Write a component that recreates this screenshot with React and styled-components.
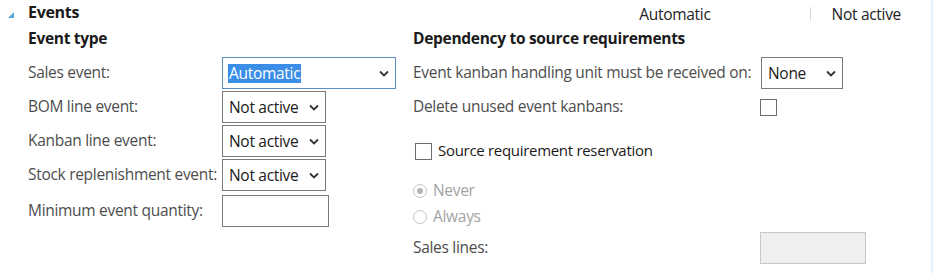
import React from 'react';
import styled, { createGlobalStyle } from 'styled-components';

const GlobalStyle = createGlobalStyle`
  html, body {
    margin: 0;
    padding: 0;
    background: #fff;
    font-family: "Open Sans", "Noto Sans", sans-serif;
  }
`;

const Page = styled.div`
  position: relative;
  width: 936px;
  height: 273px;
  background: #fff;
  overflow: hidden;
`;

const EdgeLine = styled.div`
  position: absolute;
  top: 0;
  right: 3px;
  width: 2px;
  height: 100%;
  background: #e6f0fb;
`;

const Header = styled.div`
  display: flex;
  align-items: center;
  height: 24px;
  padding-left: 8px;
`;

const Toggle = styled.svg`
  width: 6px;
  height: 6px;
  margin-top: 5px;
  margin-right: 14px;
`;

const SectionTitle = styled.div`
  font-size: 16px;
  font-weight: 700;
  color: #1a1a1a;
  letter-spacing: -0.3px;
`;

const Summary = styled.div`
  margin-left: auto;
  padding-right: 35px;
  margin-top: 4px;
  display: flex;
  align-items: center;
  font-size: 15.5px;
  color: #222;
  letter-spacing: -0.3px;
`;

const SummarySep = styled.span`
  width: 1px;
  height: 14px;
  background: #d8d8d8;
  margin: 0 21px 0 99px;
`;

const Columns = styled.div`
  display: grid;
  grid-template-columns: 385px 1fr;
  padding-left: 28px;
`;

const Column = styled.div`
  display: flex;
  flex-direction: column;
`;

const GroupTitle = styled.div`
  height: 28px;
  display: flex;
  align-items: center;
  font-size: 15.5px;
  font-weight: 700;
  color: #1a1a1a;
  letter-spacing: -0.3px;
  margin-bottom: 4px;
`;

const Row = styled.div`
  display: flex;
  align-items: center;
  height: ${p => p.h || 34}px;
  padding-left: ${p => p.indent || 0}px;
`;

const Label = styled.div`
  width: ${p => p.w}px;
  flex-shrink: 0;
  font-size: 15.5px;
  color: ${p => (p.disabled ? '#a3a3a3' : '#4d4d4d')};
  letter-spacing: -0.3px;
  white-space: nowrap;
  margin-top: -2px;
`;

const SelectBox = styled.div`
  box-sizing: border-box;
  width: ${p => p.w}px;
  height: 32px;
  border: 1px solid ${p => (p.focused ? '#5b8fc2' : '#7a7a7a')};
  display: flex;
  align-items: center;
  padding: 0 6px 0 5px;
  background: #fff;
`;

const SelectText = styled.span`
  font-size: 15.5px;
  color: ${p => (p.selected ? '#fff' : '#1a1a1a')};
  background: ${p => (p.selected ? '#3a8ee8' : 'transparent')};
  letter-spacing: -0.3px;
  line-height: 19px;
  padding: 0 1px;
`;

const Chevron = styled.svg`
  margin-left: auto;
  width: 10px;
  height: 7px;
`;

const TextInput = styled.div`
  box-sizing: border-box;
  width: ${p => p.w}px;
  height: 32px;
  border: 1px solid ${p => (p.disabled ? '#c8c8c8' : '#7a7a7a')};
  background: ${p => (p.disabled ? '#efefef' : '#fff')};
`;

const Check = styled.div`
  box-sizing: border-box;
  width: 17px;
  height: 17px;
  border: 1px solid #6e6e6e;
  background: #fff;
  flex-shrink: 0;
`;

const CheckLabel = styled.span`
  font-size: 15px;
  color: #1a1a1a;
  letter-spacing: -0.3px;
  margin-left: 6px;
  margin-top: -2px;
`;

const Radio = styled.div`
  box-sizing: border-box;
  width: 14px;
  height: 14px;
  border-radius: 50%;
  border: 1px solid #c6c6c6;
  display: flex;
  align-items: center;
  justify-content: center;
  margin-right: 6px;
  flex-shrink: 0;
  &::after {
    content: '';
    width: 6px;
    height: 6px;
    border-radius: 50%;
    background: ${p => (p.checked ? '#b5b5b5' : 'transparent')};
  }
`;

const Select = ({ w, value, focused }) => (
  <SelectBox w={w} focused={focused}>
    <SelectText selected={focused}>{value}</SelectText>
    <Chevron viewBox="0 0 10 7">
      <polyline points="1,1.5 5,5.5 9,1.5" fill="none" stroke="#333" strokeWidth="1.8" />
    </Chevron>
  </SelectBox>
);

export default function App() {
  return (
    <Page>
      <GlobalStyle />
      <Header>
        <Toggle viewBox="0 0 6 6">
          <polygon points="6,0 6,6 0,6" fill="#5aa3d8" />
        </Toggle>
        <SectionTitle>Events</SectionTitle>
        <Summary>
          <span>Automatic</span>
          <SummarySep />
          <span>Not active</span>
        </Summary>
      </Header>
      <Columns>
        <Column>
          <GroupTitle>Event type</GroupTitle>
          <Row>
            <Label w={194}>Sales event:</Label>
            <Select w={174} value="Automatic" focused />
          </Row>
          <Row>
            <Label w={194}>BOM line event:</Label>
            <Select w={104} value="Not active" />
          </Row>
          <Row>
            <Label w={194}>Kanban line event:</Label>
            <Select w={104} value="Not active" />
          </Row>
          <Row>
            <Label w={194}>Stock replenishment event:</Label>
            <Select w={104} value="Not active" />
          </Row>
          <Row h={38}>
            <Label w={194}>Minimum event quantity:</Label>
            <TextInput w={107} />
          </Row>
        </Column>
        <Column>
          <GroupTitle>Dependency to source requirements</GroupTitle>
          <Row>
            <Label w={348}>Event kanban handling unit must be received on:</Label>
            <Select w={82} value="None" />
          </Row>
          <Row>
            <Label w={347}>Delete unused event kanbans:</Label>
            <Check />
          </Row>
          <Row h={54} indent={2}>
            <Check />
            <CheckLabel>Source requirement reservation</CheckLabel>
          </Row>
          <Row h={26}>
            <Radio checked />
            <Label w={100} disabled>Never</Label>
          </Row>
          <Row h={26}>
            <Radio />
            <Label w={100} disabled>Always</Label>
          </Row>
          <Row h={36}>
            <Label w={347}>Sales lines:</Label>
            <TextInput w={106} disabled />
          </Row>
        </Column>
      </Columns>
      <EdgeLine />
    </Page>
  );
}
